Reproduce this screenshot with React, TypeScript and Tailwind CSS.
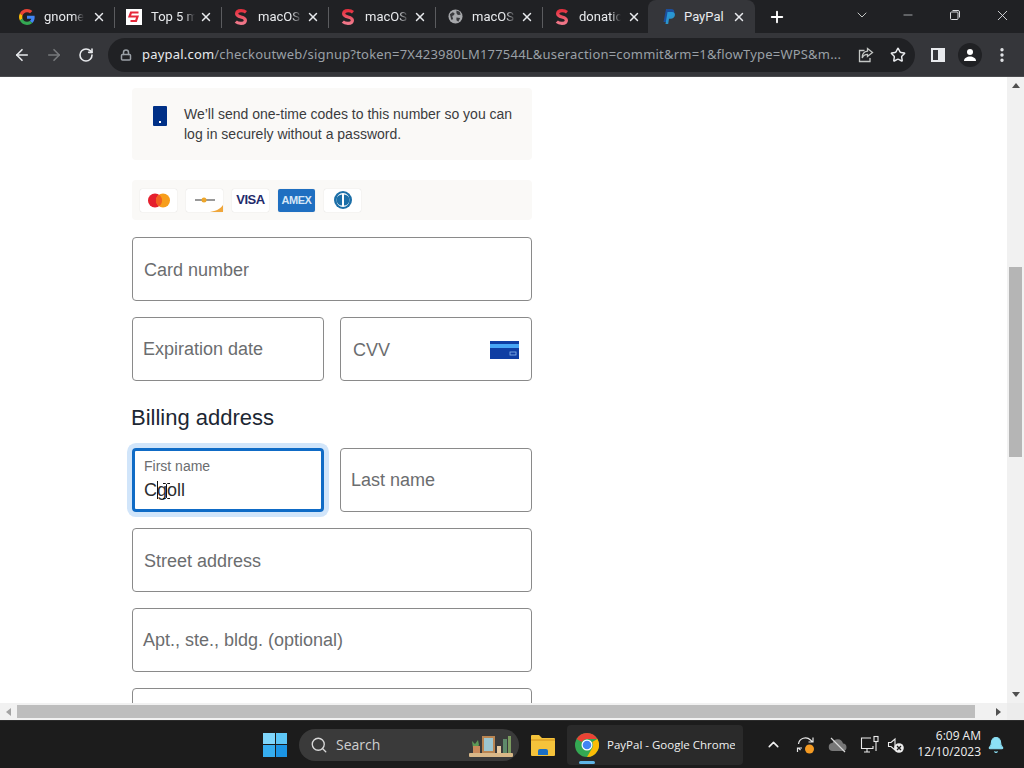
import { ArrowLeft, ArrowRight, RotateCw, Lock, X, Plus, ChevronDown, Minus, Star, MoreVertical, Search, ChevronUp, Bell } from "lucide-react";

const tabs = [
  { title: "gnome", icon: "google", textW: "w-[40px]" },
  { title: "Top 5 m", icon: "square", textW: "w-[44px]" },
  { title: "macOS", icon: "s", textW: "w-[44px]" },
  { title: "macOS", icon: "s", textW: "w-[44px]" },
  { title: "macOS", icon: "globe", textW: "w-[44px]" },
  { title: "donation", icon: "s", textW: "w-[42px]" },
];

function GoogleIcon({ size = 16 }: { size?: number }) {
  return (
    <svg width={size} height={size} viewBox="0 0 48 48">
      <path fill="#EA4335" d="M24 9.500c3.500 0 6.700 1.200 9.200 3.600l6.900-6.900C35.900 2.400 30.500 0 24 0 14.600 0 6.500 5.400 2.600 13.200l8 6.200C12.500 13.600 17.800 9.500 24 9.500z" />
      <path fill="#4285F4" d="M47 24.500c0-1.600-.2-3.100-.4-4.500H24v9h12.900c-.6 3-2.200 5.500-4.800 7.200l7.700 6C44.300 38 47 31.800 47 24.500z" />
      <path fill="#FBBC05" d="M10.600 28.600c-.5-1.400-.8-3-.8-4.600s.3-3.200.8-4.600l-8-6.200C.9 16.500 0 20.100 0 24s.9 7.500 2.600 10.800l8-6.200z" />
      <path fill="#34A853" d="M24 48c6.500 0 11.900-2.100 15.900-5.800l-7.700-6c-2.200 1.400-4.900 2.300-8.200 2.300-6.200 0-11.500-4.100-13.400-9.900l-8 6.200C6.500 42.600 14.600 48 24 48z" />
    </svg>
  );
}

function SLogo() {
  return (
    <svg width="14" height="16" viewBox="0 0 14 16" fill="none">
      <defs>
        <linearGradient id="sred" x1="0" y1="0" x2="0" y2="1">
          <stop offset="0" stopColor="#e5303f" />
          <stop offset="1" stopColor="#f0788a" />
        </linearGradient>
      </defs>
      <path d="M12 3.200C10.500 2 8.800 1.700 7 1.700 4.500 1.700 2.600 2.800 2.600 4.800c0 4 8.800 2.400 8.800 6.400 0 2.100-2 3.100-4.400 3.100-1.900 0-3.900-.5-5.200-1.700" stroke="url(#sred)" strokeWidth="3.200" />
    </svg>
  );
}

function Favicon({ kind }: { kind: string }) {
  if (kind === "google") return <GoogleIcon />;
  if (kind === "square") {
    return (
      <div className="flex h-4 w-4 items-center justify-center bg-white">
        <svg width="12" height="12" viewBox="0 0 12 12" fill="none">
          <path d="M10.500 1.500H3L1.500 5.500H9.500L8 10H2.500" stroke="#e5283a" strokeWidth="2.200" />
        </svg>
      </div>
    );
  }
  if (kind === "s") return <SLogo />;
  return (
    <svg width="15" height="15" viewBox="0 0 16 16">
      <circle cx="8" cy="8" r="7.500" fill="#a6a8ab" />
      <path d="M2 5.500 5 3.500l2 1-.5 2-2 1 1 3.500L3.500 11.500zM9 1.500l3.500 1.500 1 3-3 .5-1.500-2zM9 9l4 .5-2 4-2-1.500z" fill="#3a3b3e" />
    </svg>
  );
}

function Tab({ title, icon, textW }: { title: string; icon: string; textW: string }) {
  return (
    <div className="flex h-[33px] w-[107px] shrink-0 items-center border-r border-[#5b5c5f] border-solid [border-image:linear-gradient(transparent_8px,#5b5c5f_8px,#5b5c5f_27px,transparent_27px)_1]">
      <div className="ml-[11px] flex w-4 justify-center"><Favicon kind={icon} /></div>
      <span className={`ml-[9px] overflow-hidden whitespace-nowrap text-[13px] text-[#e8eaed] [mask-image:linear-gradient(to_right,black_75%,transparent)] ${textW}`}>{title}</span>
      <div className="ml-auto mr-[8px]"><X size={14} strokeWidth={2.500} className="text-[#e8eaed]" /></div>
    </div>
  );
}

function PayPalIcon() {
  return (
    <svg width="16" height="17" viewBox="0 0 16 17">
      <path d="M5 1h5c2.500 0 3.800 1.500 3.300 3.700-.5 2.500-2.300 3.800-4.700 3.800H7L6 14H2.500z" fill="#1c4f9c" />
      <path d="M6.500 4H11c2.200 0 3.300 1.300 2.900 3.300-.4 2.300-2 3.500-4.200 3.500H8L7.200 16H4.500z" fill="#2a9fdc" opacity="0.9" />
    </svg>
  );
}

function TabStrip() {
  return (
    <div className="flex h-[33px] shrink-0 items-center bg-[#202124] pl-[8px] font-['Roboto',sans-serif]">
      {tabs.map((t, i) => (
        <Tab key={i} {...t} />
      ))}
      <div className="-ml-[2px] flex h-[33px] w-[107px] shrink-0 items-center rounded-t-lg bg-[#35363a] pl-[13px]">
        <PayPalIcon />
        <span className="ml-[7px] text-[13px] text-[#e8eaed]">PayPal</span>
        <X size={14} strokeWidth={2.500} className="ml-auto mr-[9px] text-[#e8eaed]" />
      </div>
      <Plus size={18} strokeWidth={2.500} className="ml-[13px] text-white" />
      <ChevronDown size={16} strokeWidth={1.500} className="ml-[68px] -mt-[3px] text-[#c4c7c5]" />
      <Minus size={14} strokeWidth={1.200} className="ml-[31px] -mt-[3px] text-[#dadce0]" />
      <svg width="12" height="12" viewBox="0 0 12 12" fill="none" stroke="#dadce0" className="ml-[34px] -mt-[3px]">
        <rect x="1.500" y="3" width="7.500" height="7.500" rx="1" />
        <path d="M3.500 1.500H9A1.500 1.500 0 0 1 10.500 3v5.500" />
      </svg>
      <X size={17} strokeWidth={1.200} className="ml-[33px] -mt-[3px] text-[#e8eaed]" />
    </div>
  );
}

function Toolbar() {
  return (
    <div className="flex h-[44px] shrink-0 items-center bg-[#35363a] border-b border-[#4a4b4e] font-['Noto_Sans',sans-serif]">
      <ArrowLeft size={18} strokeWidth={2.200} className="ml-[13px] text-[#e8eaed]" />
      <ArrowRight size={18} strokeWidth={2.200} className="ml-[14px] text-[#77797c]" />
      <RotateCw size={16} strokeWidth={2.400} className="ml-[15px] text-[#e8eaed]" />
      <div className="ml-[14px] flex h-[34px] w-[807px] items-center rounded-full bg-[#202124] pl-[12px]">
        <Lock size={12} strokeWidth={3} className="text-[#9aa0a6]" />
        <div className="ml-[10px] w-[706px] overflow-hidden whitespace-nowrap text-[13px] tracking-[0.2px]">
          <span className="text-[#e8eaed]">paypal.com</span>
          <span className="text-[#9aa0a6]">/checkoutweb/signup?token=7X423980LM177544L&amp;useraction=commit&amp;rm=1&amp;flowType=WPS&amp;m...</span>
        </div>
        <svg width="18" height="18" viewBox="0 0 18 18" fill="none" stroke="#c4c7c5" strokeWidth="1.300" className="ml-auto">
          <path d="M7.500 4.500H2.500v11h10.500V12" />
          <path d="M10.500 2.500l5 4-5 4V8.300C8 8.300 6.300 9.500 5.200 12c0-3.800 2-6.500 5.300-6.800z" />
        </svg>
        <Star size={16} strokeWidth={2.200} className="ml-[15px] mr-[9px] text-[#e8eaed]" />
      </div>
      <div className="ml-[16px] flex h-[14px] w-[14px] border-2 border-[#e8eaed]">
        <div className="ml-auto h-full w-[5px] bg-[#e8eaed]" />
      </div>
      <div className="ml-[13px] flex h-[24px] w-[24px] items-center justify-center rounded-full bg-[#202124]">
        <svg width="14" height="14" viewBox="0 0 14 14" fill="#ffffff">
          <circle cx="7" cy="4" r="3" />
          <path d="M1 13c0-3 3-4.500 6-4.500s6 1.500 6 4.500z" />
        </svg>
      </div>
      <MoreVertical size={18} strokeWidth={2.500} className="ml-[11px] text-[#e8eaed]" />
    </div>
  );
}

function CardBadge({ children, bg = "bg-white" }: { children: React.ReactNode; bg?: string }) {
  return (
    <div className={`flex h-[23px] w-[37px] items-center justify-center rounded-[2px] shadow-[0_0_1px_rgba(0,0,0,0.2)] ${bg}`}>
      {children}
    </div>
  );
}

function Field({ label, className = "", children }: { label: string; className?: string; children?: React.ReactNode }) {
  return (
    <div className={`flex h-16 items-center rounded-[4px] border border-[#8a8a8a] ${className}`}>
      <span className="text-[18px] text-[#6b6d6f]">{label}</span>
      {children}
    </div>
  );
}

function PageContent() {
  return (
    <div className="ml-[132px] flex w-[400px] flex-col pt-[11px] font-['Liberation_Sans',sans-serif]">
      <div className="flex h-[72px] rounded-[4px] bg-[#faf9f7] pl-[21px] pt-[16px]">
        <div className="relative mt-[2px] h-5 w-[14px] rounded-[1px] bg-[#003087]">
          <div className="absolute bottom-[3px] left-[6px] h-[2px] w-[2px] bg-white" />
        </div>
        <p className="ml-[17px] text-[14px] leading-[20px] text-[#3a3c3e]">
          We’ll send one-time codes to this number so you can<br />log in securely without a password.
        </p>
      </div>

      <div className="mt-[20px] flex h-[40px] items-center gap-[9px] rounded-[4px] bg-[#faf9f7] pl-[8px]">
        <CardBadge>
          <svg width="24" height="15" viewBox="0 0 24 15">
            <circle cx="8" cy="7.500" r="7" fill="#e5202e" />
            <circle cx="16" cy="7.500" r="7" fill="#f79e1b" />
            <path d="M12 1.700a7 7 0 0 1 0 11.600 7 7 0 0 1 0-11.600z" fill="#f26122" />
          </svg>
        </CardBadge>
        <CardBadge>
          <svg width="37" height="23" viewBox="0 0 37 23">
            <path d="M9 11h20" stroke="#555" strokeWidth="1.200" />
            <circle cx="18" cy="11" r="2.500" fill="#eea62a" />
            <path d="M24 23c6-1 10-3 13-7v7z" fill="#f0a63a" />
          </svg>
        </CardBadge>
        <CardBadge>
          <span className="text-[13px] font-bold tracking-[-0.5px] text-[#1f2a6b]">VISA</span>
        </CardBadge>
        <CardBadge bg="bg-[#1f6fc1]">
          <span className="text-[11px] font-bold tracking-[-0.5px] text-[#d5e6f7]">AMEX</span>
        </CardBadge>
        <CardBadge>
          <svg width="20" height="20" viewBox="0 0 20 20">
            <circle cx="10" cy="10" r="9" fill="#1c6fa8" />
            <ellipse cx="10" cy="10" rx="6.500" ry="7" fill="#ffffff" />
            <path d="M9 4.500a5.500 5.500 0 0 0 0 11zM11 4.500a5.500 5.500 0 0 1 0 11z" fill="#1c6fa8" />
          </svg>
        </CardBadge>
      </div>

      <Field label="Card number" className="mt-[17px] px-[11px] pt-[2px]" />

      <div className="mt-4 grid grid-cols-[192px_192px] gap-4">
        <Field label="Expiration date" className="px-[10px]" />
        <Field label="CVV" className="justify-between px-3 pt-[2px]">
          <svg width="29" height="18" viewBox="0 0 29 18">
            <rect width="29" height="18" fill="#0f3ea3" />
            <rect y="3" width="29" height="4" fill="#48a6f5" />
            <rect x="20" y="11" width="6" height="3" fill="none" stroke="#8db8ee" strokeWidth="0.800" />
          </svg>
        </Field>
      </div>

      <h2 className="-ml-[1px] mt-[24px] h-[26px] text-[22px] leading-[26px] text-[#1c2733]">Billing address</h2>

      <div className="mt-[17px] grid grid-cols-[192px_192px] gap-4">
        <div className="relative flex h-16 flex-col rounded-[4px] border-[3px] border-[#0f6bc6] px-[9px] pt-[7px] shadow-[0_0_0_5px_#d1e5fa]">
          <span className="text-[14px] leading-[16px] text-[#6b6d6f]">First name</span>
          <span className="mt-[4px] text-[18px] leading-[24px] text-[#2c2e2f]">Cgoll</span>
          {/* text caret */}
          <div className="absolute left-[22px] top-[30px] h-[18px] w-[1px] bg-[#111]" />
          {/* mouse I-beam */}
          <svg width="9" height="16" viewBox="0 0 9 16" fill="none" stroke="#111" strokeWidth="1" className="absolute left-[27px] top-[32px]">
            <path d="M1 .5h2.500L4.500 1.500 5.500.5H8M4.500 1.500v13M1 15.500h2.500l1-1 1 1H8" />
          </svg>
        </div>
        <Field label="Last name" className="px-[10px]" />
      </div>

      <Field label="Street address" className="mt-4 px-[11px] pt-[2px]" />
      <Field label="Apt., ste., bldg. (optional)" className="mt-4 px-[10px]" />
      <Field label="" className="mt-4 px-3" />
    </div>
  );
}

function VerticalScrollbar() {
  return (
    <div className="flex w-[17px] shrink-0 flex-col items-center bg-[#f1f1f1]">
      <div className="flex h-[17px] items-center justify-center">
        <div className="h-0 w-0 border-x-[4px] border-b-[5px] border-x-transparent border-b-[#505050]" />
      </div>
      <div className="mt-[173px] h-[190px] w-[13px] bg-[#b5b5b5]" />
      <div className="mt-auto flex h-[17px] items-center justify-center">
        <div className="h-0 w-0 border-x-[4px] border-t-[5px] border-x-transparent border-t-[#505050]" />
      </div>
    </div>
  );
}

function HorizontalScrollbar() {
  return (
    <div className="flex h-[17px] shrink-0 items-center bg-[#f1f1f1]">
      <div className="flex w-[17px] justify-center">
        <div className="h-0 w-0 border-y-[4px] border-r-[5px] border-y-transparent border-r-[#a3a3a3]" />
      </div>
      <div className="h-[13px] w-[958px] bg-[#bdbdbd]" />
      <div className="flex w-[32px] justify-end pr-[6px]">
        <div className="h-0 w-0 border-y-[4px] border-l-[5px] border-y-transparent border-l-[#505050]" />
      </div>
      <div className="h-full w-[17px] bg-[#ececec]" />
    </div>
  );
}

function WinLogo() {
  return (
    <div className="grid h-6 w-6 grid-cols-2 gap-[1px]">
      <div className="bg-[#7fd6fb]" />
      <div className="bg-[#5cc6f7]" />
      <div className="bg-[#36aef0]" />
      <div className="bg-[#1b95e5]" />
    </div>
  );
}

function ChromeIcon() {
  return (
    <svg width="24" height="24" viewBox="0 0 24 24">
      <circle cx="12" cy="12" r="12" fill="#34a853" />
      <path d="M12 0a12 12 0 0 1 10.400 6H12a6 6 0 0 0-5.200 3L1.600 6A12 12 0 0 1 12 0z" fill="#ea4335" />
      <path d="M22.400 6A12 12 0 0 1 12 24l5.200-9a6 6 0 0 0 0-6z" fill="#fbbc05" />
      <circle cx="12" cy="12" r="5.500" fill="#ffffff" />
      <circle cx="12" cy="12" r="4.300" fill="#4285f4" />
    </svg>
  );
}

function Shelf() {
  return (
    <svg width="46" height="28" viewBox="0 0 46 28">
      <rect x="1" y="22" width="44" height="4" rx="1" fill="#d9b888" />
      <path d="M4 10l3 3 3-4 1 5-2 3H5z" fill="#5d9a56" />
      <rect x="5" y="15" width="7" height="7" fill="#c98a5a" />
      <rect x="14" y="5" width="13" height="17" fill="#b98552" />
      <rect x="16" y="7" width="9" height="13" fill="#9cc6d0" />
      <rect x="29" y="15" width="4" height="7" fill="#e6c9a0" />
      <rect x="35" y="8" width="4" height="14" fill="#5f8a6a" />
      <rect x="40" y="5" width="3" height="17" fill="#7a9a5f" />
    </svg>
  );
}

function Taskbar() {
  return (
    <div className="flex h-[48px] shrink-0 items-center border-t border-[#2c2c2c] bg-[#1c1c1c] font-['Open_Sans',sans-serif]">
      <div className="ml-[263px]"><WinLogo /></div>
      <div className="ml-[12px] flex h-[32px] w-[220px] items-center rounded-full bg-[#3a3a3a] pl-[11px]">
        <Search size={18} strokeWidth={1.800} className="text-[#d8d8d8]" />
        <span className="ml-[8px] text-[14px] text-[#cfcfcf]">Search</span>
        <div className="ml-auto mr-[5px]"><Shelf /></div>
      </div>
      <svg width="24" height="22" viewBox="0 0 24 22" className="ml-[12px]">
        <path d="M0 2a1 1 0 0 1 1-1h7l3 3h12a1 1 0 0 1 1 1v16a1 1 0 0 1-1 1H1a1 1 0 0 1-1-1z" fill="#f5c33b" />
        <rect y="5" width="24" height="2" fill="#e3a92a" />
        <path d="M7 21v-4a2 2 0 0 1 2-2h6a2 2 0 0 1 2 2v4z" fill="#1b6fc4" />
      </svg>
      <div className="relative ml-[12px] flex h-[40px] w-[176px] items-center rounded-[4px] bg-[#2a2a2a] pl-[8px]">
        <ChromeIcon />
        <span className="ml-[8px] w-[128px] overflow-hidden whitespace-nowrap text-[11.5px] text-[#f0f0f0]">PayPal - Google Chrome</span>
        <div className="absolute bottom-[1px] left-[12px] h-[3px] w-[16px] rounded-full bg-[#5fb4e6]" />
      </div>
      <ChevronUp size={17} strokeWidth={2.200} className="ml-[22px] text-[#f0f0f0]" />
      <svg width="20" height="20" viewBox="0 0 20 20" fill="none" stroke="#e8e8e8" strokeWidth="1.200" className="ml-[14px]">
        <path d="M2.500 9a7 7 0 0 1 12-4l2 2M17 2.500V7h-4.500M1.500 17v-4H6M2.500 13l2 2.200" />
        <circle cx="13.500" cy="14" r="4.500" fill="#f59b23" stroke="none" />
      </svg>
      <svg width="20" height="18" viewBox="0 0 20 18" className="ml-[12px]">
        <path d="M5 15a4 4 0 0 1-.5-8A5.500 5.500 0 0 1 15 7.500a3.800 3.800 0 0 1 .5 7.500z" fill="#777" />
        <path d="M3 2l14 14" stroke="#d8d8d8" strokeWidth="1.200" />
      </svg>
      <svg width="20" height="20" viewBox="0 0 20 20" fill="none" stroke="#ececec" strokeWidth="1.100" className="ml-[12px]">
        <path d="M11 3H1.500v10.500H13V11M4 17h6M7 13.500V17" />
        <rect x="14" y="1.500" width="4" height="5" />
        <path d="M16 6.500V16" />
      </svg>
      <svg width="18" height="18" viewBox="0 0 18 18" fill="none" stroke="#ececec" strokeWidth="1.100" className="ml-[7px]">
        <path d="M1.500 6.500v4h2.500l4 3.500V3L4 6.500z" />
        <circle cx="12" cy="12" r="4.800" fill="#ececec" stroke="none" />
        <path d="M10 10l4 4M14 10l-4 4" stroke="#1c1c1c" strokeWidth="1.300" />
      </svg>
      <div className="ml-auto -mt-[2px] flex flex-col items-end text-[12px] leading-[16px] text-[#f0f0f0]">
        <span>6:09 AM</span>
        <span>12/10/2023</span>
      </div>
      <Bell size={18} strokeWidth={1.500} fill="#8ce0f5" className="ml-[6px] mr-[19px] text-[#8ce0f5]" />
    </div>
  );
}

export default function App() {
  return (
    <div className="flex h-[768px] w-[1024px] flex-col overflow-hidden bg-white">
      <TabStrip />
      <Toolbar />
      <div className="flex min-h-0 flex-1">
        <div className="min-w-0 flex-1 overflow-hidden">
          <PageContent />
        </div>
        <VerticalScrollbar />
      </div>
      <HorizontalScrollbar />
      <Taskbar />
    </div>
  );
}
